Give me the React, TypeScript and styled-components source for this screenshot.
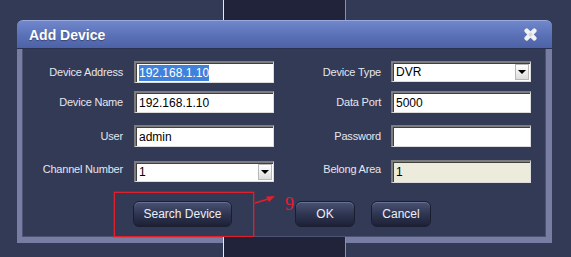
import React from "react";
import styled, { createGlobalStyle } from "styled-components";

const GlobalStyle = createGlobalStyle`
  html, body {
    margin: 0;
    padding: 0;
    background: #333a55;
    width: 571px;
    height: 257px;
    overflow: hidden;
    font-family: "Liberation Sans", Arial, sans-serif;
  }
`;

const Page = styled.div`
  display: flex;
  flex-direction: column;
  width: 571px;
  height: 257px;
`;

const Strip = styled.div`
  height: 20px;
  flex-shrink: 0;
  display: flex;
  padding-left: 223px;
`;

const DarkBlock = styled.div`
  width: 121px;
  height: 100%;
  background: #20233a;
  border-left: 1px solid #e8e8ee;
  border-right: 1px solid #8a8fa8;
`;

const Dialog = styled.div`
  margin-left: 17px;
  width: 535px;
  height: 217px;
  flex-shrink: 0;
  display: flex;
  flex-direction: column;
`;

const TitleBar = styled.div`
  height: 29px;
  flex-shrink: 0;
  box-sizing: border-box;
  display: flex;
  align-items: center;
  justify-content: space-between;
  padding: 0 14px 0 12px;
  border-radius: 6px 6px 0 0;
  background: linear-gradient(#7087cc, #5a70b6 55%, #4d62a6);
  border-top: 1px solid #9aa8dc;
  border-bottom: 1px solid #2a3150;
`;

const Title = styled.span`
  color: #ffffff;
  font-weight: bold;
  font-size: 14px;
  text-shadow: 0 1px 1px rgba(0, 0, 0, 0.35);
`;

const Body = styled.div`
  flex: 1;
  box-sizing: border-box;
  background: #333a55;
  border-left: 5px solid #777da3;
  border-right: 6px solid #777da3;
  border-bottom: 6px solid #777da3;
  box-shadow: inset 1px 0 0 #4d5373, inset -1px -1px 0 #4d5373;
  padding-top: 12px;
  display: flex;
  flex-direction: column;
`;

const Form = styled.div`
  display: grid;
  grid-template-columns: 112px 140px 117px 140px;
  grid-template-rows: 30px 34px 35px 23px;
  align-items: start;
`;

const Label = styled.label<{ $gap: number; $shift?: number }>`
  text-align: right;
  padding-right: ${(p) => p.$gap}px;
  font-size: 11px;
  letter-spacing: -0.2px;
  color: #e4e6ef;
  line-height: 22px;
  margin-top: ${(p) => p.$shift ?? 0}px;
  white-space: nowrap;
`;

const Input = styled.div<{ $bg?: string; $h?: number }>`
  box-sizing: border-box;
  height: ${(p) => p.$h ?? 22}px;
  background: ${(p) => p.$bg ?? "#ffffff"};
  border-top: 2px solid #7d7d7d;
  border-left: 2px solid #7d7d7d;
  border-right: 1px solid #dcdcdc;
  border-bottom: 1px solid #dcdcdc;
  box-shadow: inset 1px 1px 0 #404040;
  font-size: 12px;
  color: #000;
  padding-left: 3px;
  display: flex;
  align-items: center;
  position: relative;
`;

const Selected = styled.span`
  background: #3e82dc;
  color: #ffffff;
  padding: 1px 0;
`;

const DropButton = styled.div`
  position: absolute;
  right: 1px;
  top: 1px;
  bottom: 1px;
  width: 14px;
  box-sizing: border-box;
  background: linear-gradient(#ffffff, #dcdcdc);
  border: 1px solid #b8b8b8;
  display: flex;
  align-items: center;
  justify-content: center;
  &::after {
    content: "";
    border-left: 4px solid transparent;
    border-right: 4px solid transparent;
    border-top: 4px solid #000;
  }
`;

const Actions = styled.div`
  display: flex;
  align-items: flex-start;
  padding-left: 92px;
  margin-top: 9px;
`;

const RedBox = styled.div`
  border: 1px solid #e0202a;
  box-shadow: 0 0 0 1px rgba(224, 32, 42, 0.35);
  padding: 8px 21px 9px 18px;
`;

const Button = styled.button<{ $w: number; $top?: number }>`
  width: ${(p) => p.$w}px;
  height: 26px;
  margin-top: ${(p) => p.$top ?? 0}px;
  border-radius: 6px;
  border: 1px solid #1a1e30;
  background: linear-gradient(#4a5274, #2f3652 50%, #1d2137);
  box-shadow: inset 0 1px 0 #6a7296;
  color: #eceef5;
  font-family: "Liberation Sans", Arial, sans-serif;
  font-size: 12px;
  padding: 0;
  cursor: pointer;
`;

const Mark = styled.div`
  width: 41px;
  display: flex;
  align-items: flex-start;
  padding-top: 3px;
`;

const Nine = styled.span`
  color: #e0203a;
  font-family: "Liberation Serif", "Times New Roman", serif;
  font-size: 18px;
  line-height: 18px;
  margin-left: 7px;
`;

const Spacer = styled.div<{ $w: number }>`
  width: ${(p) => p.$w}px;
`;

const CloseIcon = () => (
  <svg width="15" height="15" viewBox="0 0 15 15">
    <g transform="rotate(45 7.5 7.5)">
      <rect x="5.3" y="0" width="4.4" height="15" rx="1.6" fill="#f2f2f2" />
      <rect x="0" y="5.3" width="15" height="4.4" rx="1.6" fill="#f2f2f2" />
    </g>
    <circle cx="7.5" cy="7.5" r="2" fill="#d8d8d8" />
  </svg>
);

const Arrow = () => (
  <svg width="24" height="10" viewBox="0 0 24 10">
    <line x1="1" y1="8" x2="16" y2="3.5" stroke="#e0202a" strokeWidth="1.6" />
    <polygon points="21,1 12,1.5 15,7" fill="#e0202a" />
  </svg>
);

export default function App() {
  return (
    <>
      <GlobalStyle />
      <Page>
        <Strip>
          <DarkBlock />
        </Strip>
        <Dialog>
          <TitleBar>
            <Title>Add Device</Title>
            <CloseIcon />
          </TitleBar>
          <Body>
            <Form>
              <Label $gap={11}>Device Address</Label>
              <Input>
                <Selected>192.168.1.10</Selected>
              </Input>
              <Label $gap={10}>Device Type</Label>
              <Input $h={21}>
                DVR
                <DropButton />
              </Input>

              <Label $gap={11}>Device Name</Label>
              <Input>192.168.1.10</Input>
              <Label $gap={10}>Data Port</Label>
              <Input>5000</Input>

              <Label $gap={11}>User</Label>
              <Input>admin</Input>
              <Label $gap={10}>Password</Label>
              <Input />

              <Label $gap={11} $shift={-2}>Channel Number</Label>
              <Input $h={21} style={{ marginTop: 1 }}>
                1
                <DropButton />
              </Input>
              <Label $gap={10} $shift={-2}>Belong Area</Label>
              <Input $bg="#edebdc" $h={23}>1</Input>
            </Form>
            <Actions>
              <RedBox>
                <Button $w={99}>Search Device</Button>
              </RedBox>
              <Mark>
                <Arrow />
                <Nine>9</Nine>
              </Mark>
              <Button $w={60} $top={9}>OK</Button>
              <Spacer $w={16} />
              <Button $w={60} $top={9}>Cancel</Button>
            </Actions>
          </Body>
        </Dialog>
        <Strip>
          <DarkBlock />
        </Strip>
      </Page>
    </>
  );
}
